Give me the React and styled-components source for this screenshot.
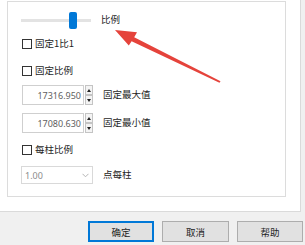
import React from "react";
import styled, { createGlobalStyle } from "styled-components";

const Global = createGlobalStyle`
  html, body { margin: 0; padding: 0; background: #f0f0f0; }
  body { font-family: "Noto Sans CJK SC", "Noto Sans", sans-serif; }
`;

const Dialog = styled.div`
  width: 305px;
  height: 245px;
  background: #f0f0f0;
  display: flex;
  flex-direction: column;
  position: relative;
  overflow: hidden;
  font-size: 9.5px;
  color: #1e1e1e;
`;

const TabPage = styled.div`
  box-sizing: border-box;
  width: 301px;
  height: 212px;
  background: #fff;
  border-right: 1px solid #dadada;
  border-bottom: 1px solid #dadada;
  padding: 1px 0 0 7px;
`;

const GroupBox = styled.div`
  box-sizing: border-box;
  width: 279px;
  height: 196px;
  border: 1px solid #dcdcdc;
  padding: 9px 0 0 13px;
  display: flex;
  flex-direction: column;
`;

const Row = styled.div`
  display: flex;
  align-items: center;
  height: ${(p) => p.$h}px;
  margin-top: ${(p) => p.$mt || 0}px;
`;

const Slider = styled.div`
  position: relative;
  width: 70px;
  height: 18px;
  display: flex;
  align-items: center;
`;

const Track = styled.div`
  width: 100%;
  height: 3px;
  background: #e3e3e3;
`;

const Thumb = styled.div`
  position: absolute;
  left: 48px;
  top: 1px;
  width: 8px;
  height: 17px;
  border-radius: 2px;
  background: #0078d7;
`;

const Label = styled.span`
  margin-left: ${(p) => p.$ml || 0}px;
  line-height: 1;
  white-space: nowrap;
`;

const Box = styled.span`
  box-sizing: border-box;
  width: 10px;
  height: 10px;
  border: 1px solid #333;
  background: #fff;
  margin-left: 1px;
  margin-right: 3px;
`;

const NumInput = styled.div`
  box-sizing: border-box;
  width: 62px;
  height: 20px;
  margin-left: 1px;
  border: 1px solid #cfcfcf;
  display: flex;
  align-items: center;
  justify-content: flex-end;
  padding-right: 2px;
  font-family: "Noto Sans", "Open Sans", sans-serif;
  font-size: 9px;
  color: #5f5f5f;
`;

const Spin = styled.div`
  display: flex;
  flex-direction: column;
  margin-left: 1px;
  height: 20px;
`;

const SpinBtn = styled.div`
  box-sizing: border-box;
  width: 8px;
  height: 10px;
  border: 1px solid #c4c4c4;
  background: #f4f4f4;
  display: flex;
  align-items: center;
  justify-content: center;
  &::after {
    content: "";
    border-left: 2px solid transparent;
    border-right: 2px solid transparent;
    ${(p) => (p.$up ? "border-bottom: 3px solid #222;" : "border-top: 3px solid #222;")}
  }
`;

const Select = styled.div`
  box-sizing: border-box;
  width: 72px;
  height: 18px;
  border: 1px solid #d9d9d9;
  display: flex;
  align-items: center;
  justify-content: space-between;
  padding: 0 3px 0 3px;
  font-family: "Noto Sans", "Open Sans", sans-serif;
  font-size: 9px;
  color: #8c8c8c;
`;

const Footer = styled.div`
  display: flex;
  gap: 8px;
  padding: 9px 0 0 88px;
`;

const Button = styled.div`
  box-sizing: border-box;
  width: ${(p) => p.$w}px;
  height: 21px;
  background: #e1e1e1;
  border: ${(p) => (p.$primary ? "2px solid #0078d7" : "1px solid #adadad")};
  display: flex;
  align-items: center;
  justify-content: center;
  font-size: 9.5px;
  color: #1e1e1e;
`;

const ArrowSvg = styled.svg`
  position: absolute;
  left: 0;
  top: 0;
  pointer-events: none;
`;

function Checkbox({ label, mt }) {
  return (
    <Row $h={14} $mt={mt}>
      <Box />
      <Label>{label}</Label>
    </Row>
  );
}

function Spinner({ value, label, mt }) {
  return (
    <Row $h={20} $mt={mt}>
      <NumInput>{value}</NumInput>
      <Spin>
        <SpinBtn $up />
        <SpinBtn />
      </Spin>
      <Label $ml={10}>{label}</Label>
    </Row>
  );
}

export default function App() {
  return (
    <>
      <Global />
      <Dialog>
        <TabPage>
          <GroupBox>
            <Row $h={18}>
              <Slider>
                <Track />
                <Thumb />
              </Slider>
              <Label $ml={10}>比例</Label>
            </Row>
            <Checkbox label="固定1比1" mt={8} />
            <Checkbox label="固定比例" mt={13} />
            <Spinner value="17316.950" label="固定最大值" mt={7} />
            <Spinner value="17080.630" label="固定最小值" mt={8} />
            <Checkbox label="每柱比例" mt={10} />
            <Row $h={18} $mt={9}>
              <Select>
                <span>1.00</span>
                <svg width="7" height="5" viewBox="0 0 7 5">
                  <path d="M0.5 0.8 L3.5 3.8 L6.5 0.8" fill="none" stroke="#b5b5b5" strokeWidth="1" />
                </svg>
              </Select>
              <Label $ml={10}>点每柱</Label>
            </Row>
          </GroupBox>
        </TabPage>
        <Footer>
          <Button $w={66} $primary>确定</Button>
          <Button $w={67}>取消</Button>
          <Button $w={66}>帮助</Button>
        </Footer>
        <ArrowSvg width="305" height="245" viewBox="0 0 305 245">
          <polygon
            points="115,30 137,32.2 134.2,37.3 220.5,81.3 219.5,82.7 131.6,41.3 128.8,45.6"
            fill="#e5433b"
          />
        </ArrowSvg>
      </Dialog>
    </>
  );
}
